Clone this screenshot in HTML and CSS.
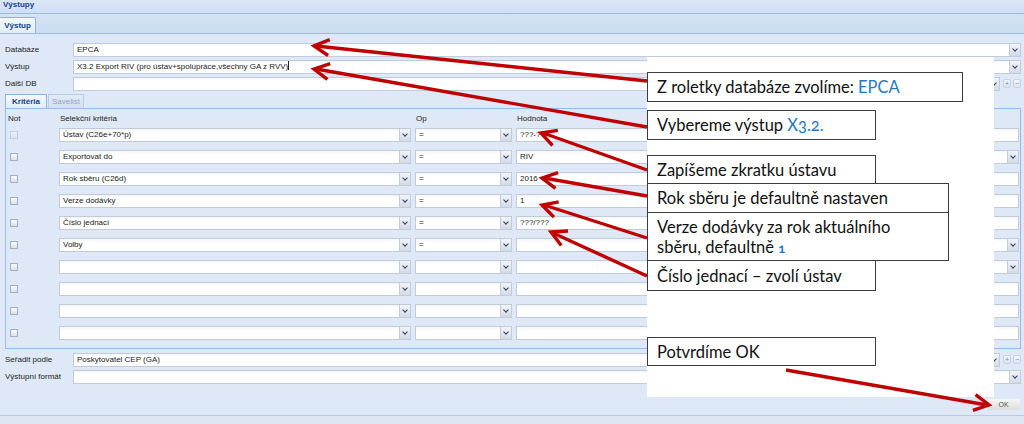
FILE: index.html
```html
<!DOCTYPE html>
<html lang="cs">
<head>
<meta charset="utf-8">
<title>Výstupy</title>
<link rel="stylesheet" href="styles.css">
</head>
<body>
<div class="title">Výstupy</div>
<div class="tabbar"><div class="tab">Výstup</div></div>

<div class="body">
  <div class="frow"><label>Databáze</label><div class="combo"><div class="inp">EPCA</div><span class="trig"></span></div></div>
  <div class="frow"><label>Výstup</label><div class="combo"><div class="inp">X3.2 Export RIV (pro ústav+spolupráce,všechny GA z RVV)<span class="caret"></span></div><span class="trig"></span></div></div>
  <div class="frow"><label>Další DB</label><div class="combo"><div class="inp"></div><span class="trig"></span></div><span class="pm">+</span><span class="pm">−</span></div>

  <div class="itabs"><div class="itab on">Kritéria</div><div class="itab">Savelist</div></div>
  <div class="grid">
    <div class="ghead">
      <div class="c-not">Not</div><div class="c-sel">Selekční kritéria</div><div class="c-op">Op</div><div class="c-val">Hodnota</div>
    </div>
    <div class="grow">
      <div class="c-not"><span class="cb dis"></span></div>
      <div class="combo c-sel"><div class="inp">Ústav (C26e+70*p)</div><span class="trig"></span></div>
      <div class="combo c-op"><div class="inp">=</div><span class="trig"></span></div>
      <div class="combo c-val"><div class="inp">???-?</div></div>
    </div>
    <div class="grow">
      <div class="c-not"><span class="cb"></span></div>
      <div class="combo c-sel"><div class="inp">Exportovat do</div><span class="trig"></span></div>
      <div class="combo c-op"><div class="inp">=</div><span class="trig"></span></div>
      <div class="combo c-val"><div class="inp">RIV</div><span class="trig"></span></div>
    </div>
    <div class="grow">
      <div class="c-not"><span class="cb"></span></div>
      <div class="combo c-sel"><div class="inp">Rok sběru (C26d)</div><span class="trig"></span></div>
      <div class="combo c-op"><div class="inp">=</div><span class="trig"></span></div>
      <div class="combo c-val"><div class="inp">2016</div></div>
    </div>
    <div class="grow">
      <div class="c-not"><span class="cb"></span></div>
      <div class="combo c-sel"><div class="inp">Verze dodávky</div><span class="trig"></span></div>
      <div class="combo c-op"><div class="inp">=</div><span class="trig"></span></div>
      <div class="combo c-val"><div class="inp">1</div></div>
    </div>
    <div class="grow">
      <div class="c-not"><span class="cb"></span></div>
      <div class="combo c-sel"><div class="inp">Číslo jednací</div><span class="trig"></span></div>
      <div class="combo c-op"><div class="inp">=</div><span class="trig"></span></div>
      <div class="combo c-val"><div class="inp">???/???</div></div>
    </div>
    <div class="grow">
      <div class="c-not"><span class="cb"></span></div>
      <div class="combo c-sel"><div class="inp">Volby</div><span class="trig"></span></div>
      <div class="combo c-op"><div class="inp">=</div><span class="trig"></span></div>
      <div class="combo c-val"><div class="inp"></div><span class="trig"></span></div>
    </div>
    <div class="grow">
      <div class="c-not"><span class="cb"></span></div>
      <div class="combo c-sel"><div class="inp"></div><span class="trig"></span></div>
      <div class="combo c-op"><div class="inp"></div><span class="trig"></span></div>
      <div class="combo c-val"><div class="inp"></div><span class="trig"></span></div>
    </div>
    <div class="grow">
      <div class="c-not"><span class="cb"></span></div>
      <div class="combo c-sel"><div class="inp"></div><span class="trig"></span></div>
      <div class="combo c-op"><div class="inp"></div><span class="trig"></span></div>
      <div class="combo c-val"><div class="inp"></div></div>
    </div>
    <div class="grow">
      <div class="c-not"><span class="cb"></span></div>
      <div class="combo c-sel"><div class="inp"></div><span class="trig"></span></div>
      <div class="combo c-op"><div class="inp"></div><span class="trig"></span></div>
      <div class="combo c-val"><div class="inp"></div></div>
    </div>
    <div class="grow">
      <div class="c-not"><span class="cb"></span></div>
      <div class="combo c-sel"><div class="inp"></div><span class="trig"></span></div>
      <div class="combo c-op"><div class="inp"></div><span class="trig"></span></div>
      <div class="combo c-val"><div class="inp"></div></div>
    </div>
  </div>

  <div class="frow sort"><label>Seřadit podle</label><div class="combo"><div class="inp">Poskytovatel CEP (GA)</div><span class="trig"></span></div><span class="pm">+</span><span class="pm">−</span></div>
  <div class="frow"><label>Výstupní formát</label><div class="combo"><div class="inp"></div><span class="trig"></span></div></div>
</div>

<div class="footer"><button class="ok">OK</button></div>
<div class="bottom"></div>

<div class="anno"></div>
<div class="callout c1"><span>Z roletky databáze zvolíme: <span class="hl">EPCA</span></span></div>
<div class="callout c2"><span>Vybereme výstup <span class="hl">X3.2.</span></span></div>
<div class="callout c3"><span>Zapíšeme zkratku ústavu</span></div>
<div class="callout c4"><span>Rok sběru je defaultně nastaven</span></div>
<div class="callout c5"><span>Verze dodávky za rok aktuálního<br>sběru, defaultně <span class="hl small">1</span></span></div>
<div class="callout c6"><span>Číslo jednací – zvolí ústav</span></div>
<div class="callout c7"><span>Potvrdíme OK</span></div>

<svg class="arrows" width="1024" height="424" viewBox="0 0 1024 424">
  <g fill="none" stroke="#c00000" stroke-width="3.4" stroke-linejoin="miter" stroke-linecap="butt">
    <line x1="647" y1="81" x2="316" y2="46"/>
    <polyline points="328.1,55.5 314,46 329.8,39.6"/>
    <line x1="647" y1="127" x2="316" y2="69"/>
    <polyline points="327.4,79.4 314,69 330.2,63.7"/>
    <line x1="647" y1="170" x2="543" y2="133"/>
    <polyline points="552.5,145.5 541,133 557.8,130.4"/>
    <line x1="647" y1="196" x2="544" y2="178"/>
    <polyline points="555.5,188.4 542,178 558.1,172.7"/>
    <line x1="647" y1="238" x2="544" y2="205"/>
    <polyline points="553.9,217.1 542,205 558.7,201.9"/>
    <line x1="647" y1="276" x2="553" y2="233"/>
    <polyline points="561.3,245.5 551,232 568,231"/>
    <line x1="786" y1="370" x2="987" y2="405"/>
    <polyline points="975.6,394.6 989,405 972.9,410.3"/>
  </g>
</svg>
</body>
</html>
```
FILE: styles.css
```css
* { box-sizing: border-box; margin: 0; padding: 0; }
html, body { width: 1024px; height: 424px; overflow: hidden; }
body {
  position: relative;
  background: #dfe8f6;
  font-family: "Liberation Sans", Arial, sans-serif;
  font-size: 8px;
  color: #222;
}

.title {
  height: 14px;
  padding: 0 0 0 3px;
  line-height: 10px;
  background: linear-gradient(#dbe7f6, #cfdef2);
  border-bottom: 1px solid #99bbe8;
  font-weight: bold;
  color: #15428b;
}
.tabbar {
  height: 20px;
  padding-top: 3px;
  display: flex;
  background: linear-gradient(#d6e3f4, #cbdbf1);
  border-bottom: 1px solid #99bbe8;
}
.tab {
  width: 36px;
  height: 16px;
  line-height: 16px;
  text-align: center;
  font-weight: bold;
  color: #15428b;
  background: linear-gradient(#f3f7fc, #e2ebf8);
  border: 1px solid #8db2e3;
  border-left: none;
  border-bottom: none;
  border-radius: 0 2px 0 0;
}

.body {
  height: 358px;
  padding: 9px 3px 0 5px;
}
.frow {
  display: flex;
  height: 14px;
  margin-bottom: 3px;
}
.frow label {
  width: 68px;
  flex: none;
  line-height: 14px;
  white-space: nowrap;
}
.combo { display: flex; flex: 1; min-width: 0; height: 14px; }
.inp {
  flex: 1;
  min-width: 0;
  height: 14px;
  background: linear-gradient(#f4f6f9 0, #fff 3px);
  border: 1px solid #c2cbd9;
  line-height: 12px;
  padding-left: 3px;
  white-space: nowrap;
  overflow: hidden;
  color: #222;
}
.caret {
  display: inline-block;
  width: 1px;
  height: 9px;
  background: #222;
  vertical-align: -1px;
}
.trig {
  flex: none;
  width: 11px;
  height: 14px;
  display: flex;
  align-items: center;
  justify-content: center;
  background: linear-gradient(#f2f4f8, #d4dae4);
  border: 1px solid #c2cbd9;
  border-left: none;
}
.trig::after {
  content: "";
  width: 3px;
  height: 3px;
  margin-top: -2px;
  border-right: 1.3px solid #2c3d66;
  border-bottom: 1.3px solid #2c3d66;
  transform: rotate(45deg);
}
.pm {
  flex: none;
  width: 8px;
  height: 9px;
  margin: 2px 0 0 2px;
  line-height: 8px;
  text-align: center;
  font-size: 7px;
  color: #6b86b6;
  background: linear-gradient(#f3f6fb, #dbe3ef);
  border: 1px solid #c5d2e6;
  border-radius: 2px;
}
.pm:first-of-type { margin-left: 3px; }

.itabs {
  display: flex;
  height: 15px;
  border-bottom: 1px solid #99bbe8;
}
.itab {
  width: 36px;
  height: 14px;
  line-height: 14px;
  text-align: center;
  color: #8fa6c6;
  background: linear-gradient(#e2eaf6, #d4e0f1);
  border: 1px solid #b6cbe8;
  border-bottom: none;
  margin-right: 1px;
}
.itab.on {
  width: 42px;
  font-weight: bold;
  color: #15428b;
  background: linear-gradient(#f4f8fd, #e3ecf8);
  border-color: #8db2e3;
}

.grid {
  height: 240px;
  border: 1px solid #99bbe8;
  border-top: none;
  padding-right: 1px;
  margin-bottom: 4px;
}
.ghead, .grow { display: flex; }
.ghead { height: 19px; padding-top: 5px; line-height: 10px; }
.grow { height: 22px; }
.c-not { width: 53px; flex: none; }
.ghead .c-not { padding-left: 2px; }
.c-sel { width: 352px; flex: none; }
.c-op { width: 97px; flex: none; margin-left: 4px; }
.c-val { flex: 1; margin-left: 4px; }
.ghead .c-op, .ghead .c-val, .ghead .c-sel { padding-left: 1px; }
.cb {
  display: block;
  width: 8px;
  height: 8px;
  margin: 3px 0 0 4px;
  border: 1px solid #a3aec0;
  background: linear-gradient(#fbfbfc, #dbe0e8);
}
.cb.dis { opacity: 0.45; }

.footer {
  height: 23px;
  display: flex;
  justify-content: flex-end;
  align-items: center;
  padding: 1px 4px 0 0;
}
.ok {
  width: 33px;
  height: 11px;
  font: 7px "Liberation Sans", Arial, sans-serif;
  color: #555;
  background: linear-gradient(#f6f6f6, #dcdcdc);
  border: none;
  border-radius: 2px;
}
.bottom {
  height: 9px;
  border-top: 1px solid #b9cbe4;
  background: #dde6f3;
}

.anno {
  position: absolute;
  left: 647px;
  top: 57px;
  width: 347px;
  height: 340px;
  background: #fff;
}
.callout {
  position: absolute;
  left: 647px;
  display: flex;
  align-items: center;
  padding: 0 0 0 9px;
  background: #fff;
  border: 1.5px solid #3c3c3c;
  font-family: Lato, "Liberation Sans", sans-serif;
  font-size: 16.5px;
  line-height: 20px;
  color: #111;
  white-space: nowrap;
}
.hl { color: #2378c3; font-variant-numeric: oldstyle-nums; }
.hl.small { font-size: 13px; font-weight: bold; }
.c1 { top: 72px; width: 316px; height: 30px; }
.c2 { top: 110px; width: 229px; height: 30px; }
.c3 { top: 155px; width: 229px; height: 29px; }
.c4 { top: 183px; width: 302px; height: 30px; }
.c5 { top: 212px; width: 302px; height: 49px; padding-top: 1px; }
.c6 { top: 260px; width: 229px; height: 31px; }
.c7 { top: 337px; width: 229px; height: 29px; }

.arrows {
  position: absolute;
  left: 0;
  top: 0;
  pointer-events: none;
}
```
